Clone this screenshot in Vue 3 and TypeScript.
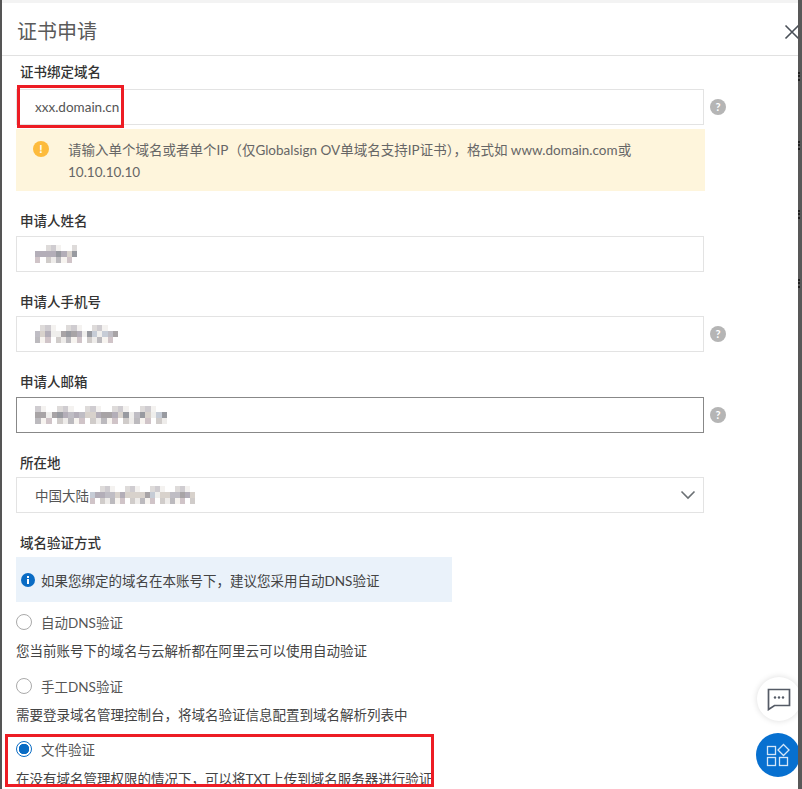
<script setup lang="ts">
interface Cell { key: number; color: string }

const rowTones: string[][] = [
  ['#ffffff', '#f4f2f0', '#dedbda', '#ffffff', '#cfccd0'],
  ['#a8a4a6', '#bfbdc4', '#989aa0', '#d8d2cc', '#b3aeb8', '#c6ccd6', '#efeeec'],
  ['#d0ccca', '#eeecea', '#bcbabe', '#f7f4f0', '#d0c4c8', '#ffffff'],
]

function mosaic(cols: number, seed: number): Cell[] {
  let s = seed
  const out: Cell[] = []
  for (let r = 0; r < 3; r++) {
    const tones = rowTones[r]
    for (let c = 0; c < cols; c++) {
      s = (s * 9301 + 49297) % 233280
      out.push({ key: r * cols + c, color: tones[s % tones.length] })
    }
  }
  return out
}

const blurName = mosaic(8, 11)
const blurPhone = mosaic(16, 23)
const blurMail = mosaic(24, 37)
const blurPlace = mosaic(21, 51)
</script>

<template>
  <div class="page">
    <div class="edge-left"></div>
    <main class="drawer">
      <header class="head">
        <h1 class="title">证书申请</h1>
        <svg class="close" width="16" height="16" viewBox="0 0 16 16" aria-hidden="true">
          <path d="M1.5 1.5 14.5 14.5M14.5 1.5 1.5 14.5" stroke="#4a5058" stroke-width="1.6" fill="none" />
        </svg>
      </header>

      <form class="form" @submit.prevent>
        <div class="label first">证书绑定域名</div>
        <div class="row">
          <div class="input">xxx.domain.cn</div>
          <span class="help">?</span>
        </div>
        <div class="warn">
          <span class="warn-icon">!</span>
          <p class="warn-text">请输入单个域名或者单个IP（仅Globalsign OV单域名支持IP证书），格式如 www.domain.com或 10.10.10.10</p>
        </div>

        <div class="label gap-top wide">申请人姓名</div>
        <div class="row">
          <div class="input">
            <span class="mosaic m-name"><i v-for="c in blurName" :key="c.key" :style="{ background: c.color }"></i></span>
          </div>
        </div>

        <div class="label gap-top">申请人手机号</div>
        <div class="row">
          <div class="input">
            <span class="mosaic m-phone"><i v-for="c in blurPhone" :key="c.key" :style="{ background: c.color }"></i></span>
          </div>
          <span class="help">?</span>
        </div>

        <div class="label gap-top wide">申请人邮箱</div>
        <div class="row">
          <div class="input focused">
            <span class="mosaic m-mail"><i v-for="c in blurMail" :key="c.key" :style="{ background: c.color }"></i></span>
          </div>
          <span class="help">?</span>
        </div>

        <div class="label gap-top">所在地</div>
        <div class="row">
          <div class="input select">
            <span>中国大陆</span>
            <span class="mosaic m-place"><i v-for="c in blurPlace" :key="c.key" :style="{ background: c.color }"></i></span>
            <svg class="chevron" width="16" height="10" viewBox="0 0 16 10" aria-hidden="true">
              <path d="M1.5 1.5 8 8l6.5-6.5" stroke="#6b7074" stroke-width="1.6" fill="none" />
            </svg>
          </div>
        </div>

        <div class="label gap-top">域名验证方式</div>
        <div class="info">
          <svg width="14" height="14" viewBox="0 0 14 14" aria-hidden="true">
            <circle cx="7" cy="7" r="7" fill="#0a6cc4" />
            <rect x="6" y="6" width="2" height="5" fill="#fff" />
            <rect x="6" y="3" width="2" height="2" fill="#fff" />
          </svg>
          <span>如果您绑定的域名在本账号下，建议您采用自动DNS验证</span>
        </div>

        <div class="option opt-1"><span class="radio"></span>自动DNS验证</div>
        <p class="desc">您当前账号下的域名与云解析都在阿里云可以使用自动验证</p>
        <div class="option"><span class="radio"></span>手工DNS验证</div>
        <p class="desc">需要登录域名管理控制台，将域名验证信息配置到域名解析列表中</p>
        <div class="option opt-3"><span class="radio on"></span>文件验证</div>
        <p class="desc last">在没有域名管理权限的情况下，可以将TXT上传到域名服务器进行验证</p>
      </form>

      <div class="mark mark-domain"></div>
      <div class="mark mark-file"></div>

      <button class="fab chat" type="button" aria-label="chat">
        <svg width="24" height="24" viewBox="0 0 24 24" aria-hidden="true">
          <path d="M1.5 2.5h21v16H7.5L1.5 22.5z" fill="none" stroke="#555b66" stroke-width="1.7" />
          <circle cx="8" cy="10.5" r="1.2" fill="#555b66" />
          <circle cx="12" cy="10.5" r="1.2" fill="#555b66" />
          <circle cx="16" cy="10.5" r="1.2" fill="#555b66" />
        </svg>
      </button>
      <button class="fab apps" type="button" aria-label="apps">
        <svg width="24" height="24" viewBox="0 0 24 24" aria-hidden="true">
          <g fill="none" stroke="#d4e6f8" stroke-width="1.3">
            <rect x="1.5" y="3.5" width="8" height="8" />
            <path d="M17.5 1.5 23 7l-5.5 5.5L12 7z" />
            <rect x="1.5" y="14.5" width="8" height="8" />
            <rect x="13.5" y="14.5" width="8" height="8" />
          </g>
        </svg>
      </button>
    </main>
    <div class="edge-right">
      <i class="speck s1"></i><i class="speck s2"></i><i class="speck s3"></i><i class="speck s4"></i>
    </div>
  </div>
</template>

<style scoped>
.page {
  width: 802px;
  height: 789px;
  display: flex;
  overflow: hidden;
  background: #fff;
  font-family: Lato, "Noto Sans CJK SC", sans-serif;
  font-size: 13.5px;
  color: #555;
}
.edge-left { width: 2px; flex: none; background: #555; }
.edge-right {
  width: 4px;
  flex: none;
  background: #585858;
  display: flex;
  flex-direction: column;
  z-index: 3;
}
.speck { display: block; height: 9px; margin-top: 60px; border-left: 2px dotted #222; }
.s1 { margin-top: 72px; }
.drawer {
  position: relative;
  flex: 1;
  min-width: 0;
  border-top: 3px solid #f3f3f3;
}
.head {
  height: 53px;
  box-sizing: border-box;
  padding: 3px 0 0 15px;
  display: flex;
  align-items: center;
  justify-content: space-between;
  border-bottom: 1px solid #e1e1e1;
}
.title {
  margin: 0;
  font-size: 20px;
  line-height: 28px;
  font-weight: 400;
  color: #5a5a5a;
}
.close { margin: 3px -2px 0 0; flex: none; }
.form { padding: 0 0 0 14px; }
.label {
  height: 20px;
  line-height: 20px;
  padding-left: 4px;
  font-weight: 500;
  color: #333;
  margin-bottom: 4px;
}
.label.first { margin-top: 6px; margin-bottom: 7px; }
.label.wide { margin-bottom: 5px; }
.gap-top { margin-top: 20px; }
.row { display: flex; align-items: center; }
.input {
  width: 688px;
  height: 36px;
  flex: none;
  box-sizing: border-box;
  border: 1px solid #e3e3e3;
  padding-left: 18px;
  display: flex;
  align-items: center;
  color: #555;
}
.focused { border-color: #888; }
.select { position: relative; }
.chevron { position: absolute; right: 7px; top: 12px; }
.help {
  width: 16px;
  height: 16px;
  margin-left: 6px;
  border-radius: 50%;
  background: #b5b5b5;
  color: #fff;
  font-size: 11px;
  font-weight: 700;
  line-height: 16px;
  text-align: center;
}
.warn {
  width: 689px;
  height: 62px;
  margin-top: 4px;
  box-sizing: border-box;
  background: #fef5dc;
  padding: 10px 60px 0 17px;
  display: flex;
  gap: 19px;
}
.warn-icon {
  width: 16px;
  height: 16px;
  margin-top: 2px;
  flex: none;
  border-radius: 50%;
  background: #fdbb3d;
  color: #fff;
  font-size: 12px;
  font-weight: 700;
  line-height: 16px;
  text-align: center;
}
.warn-text { margin: 0; line-height: 22px; color: #666; }
.mosaic { display: grid; grid-auto-rows: 6px; }
.mosaic i { display: block; }
.m-name { width: 42px; grid-template-columns: repeat(8, 1fr); }
.m-phone { width: 83px; grid-template-columns: repeat(16, 1fr); }
.m-mail { width: 132px; grid-template-columns: repeat(24, 1fr); }
.m-place { width: 105px; margin-left: 1px; grid-template-columns: repeat(21, 1fr); }
.info {
  width: 436px;
  height: 45px;
  box-sizing: border-box;
  background: #eaf2fa;
  padding-left: 5px;
  display: flex;
  align-items: center;
  gap: 6px;
  color: #444;
}
.option {
  height: 24px;
  display: flex;
  align-items: center;
  gap: 9px;
  color: #555;
  margin-top: 13px;
}
.opt-1 { margin-top: 8px; }
.opt-3 { margin-top: 12px; }
.radio {
  width: 16px;
  height: 16px;
  box-sizing: border-box;
  flex: none;
  border: 1px solid #aaa;
  border-radius: 50%;
  background: #fff;
}
.radio.on {
  border-color: #0a6cc4;
  background: radial-gradient(circle, #0a6cc4 0 5px, #fff 5.5px);
}
.desc { margin: 7px 0 0; line-height: 20px; color: #444; white-space: nowrap; }
.desc.last { margin-top: 8px; }
.mark { position: absolute; border: 3px solid #ed1c24; box-sizing: border-box; }
.mark-domain { left: 15px; top: 82px; width: 107px; height: 43px; }
.mark-file { left: 3px; top: 731px; width: 429px; height: 53px; }
.fab {
  position: absolute;
  width: 44px;
  height: 44px;
  padding: 0;
  border: 0;
  border-radius: 50%;
  display: flex;
  align-items: center;
  justify-content: center;
}
.chat { left: 755px; top: 674px; background: #fff; box-shadow: 0 0 6px rgba(0, 0, 0, 0.14); }
.apps { left: 754px; top: 730px; background: #0770d0; }
</style>
